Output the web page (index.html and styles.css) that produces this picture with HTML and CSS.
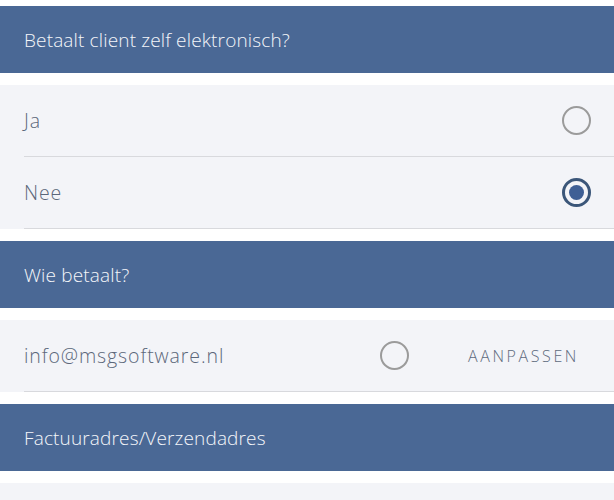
FILE: index.html
```html
<!DOCTYPE html>
<html lang="nl">
<head>
	<meta charset="UTF-8">
	<title>Betaling</title>
	<link rel="stylesheet" href="styles.css">
</head>
<body>
	<div class="page">
		<div class="head">Betaalt client zelf elektronisch?</div>
		<div class="group">
			<div class="row">
				<span class="label">Ja</span>
				<span class="radio"></span>
			</div>
			<div class="row">
				<span class="label">Nee</span>
				<span class="radio on"></span>
			</div>
		</div>
		<div class="head">Wie betaalt?</div>
		<div class="group">
			<div class="row">
				<span class="label">info@msgsoftware.nl</span>
				<span class="radio"></span>
				<span class="action">AANPASSEN</span>
			</div>
		</div>
		<div class="head">Factuuradres/Verzendadres</div>
		<div class="group">
			<div class="row"></div>
		</div>
	</div>
</body>
</html>
```

FILE: styles.css
```css
* {margin: 0;padding: 0;box-sizing: border-box;}
html, body {height: 100%;background: #fff;overflow: hidden;}
body {font-family: "Open Sans", "Noto Sans", sans-serif;font-weight: 300;}
.page {display: flex;flex-direction: column;gap: 12px;padding-top: 6px;}
.head {height: 67px;display: flex;align-items: center;padding-left: 24px;background: #4a6895;color: #f4f6fa;font-size: 19px;letter-spacing: 0.15px;}
.group {background: #f3f4f8;}
.row {height: 72px;margin-left: 24px;display: flex;align-items: center;border-bottom: 1px solid #d8d9dd;color: #5b677a;font-size: 19.5px;letter-spacing: 0.9px;}
.label {flex: 1;}
.radio {width: 29px;height: 29px;border-radius: 50%;border: 2.5px solid #9b9b9b;margin-right: 23px;display: flex;align-items: center;justify-content: center;}
.radio.on {border: 3px solid #3b5679;}
.radio.on::after {content: "";width: 15px;height: 15px;border-radius: 50%;background: #3e5f95;}
.action {font-size: 16px;letter-spacing: 2.6px;color: #5d6a7d;margin-left: 59px;margin-right: 35px;}
.row:has(.action) .radio {margin-right: 0;}
```
